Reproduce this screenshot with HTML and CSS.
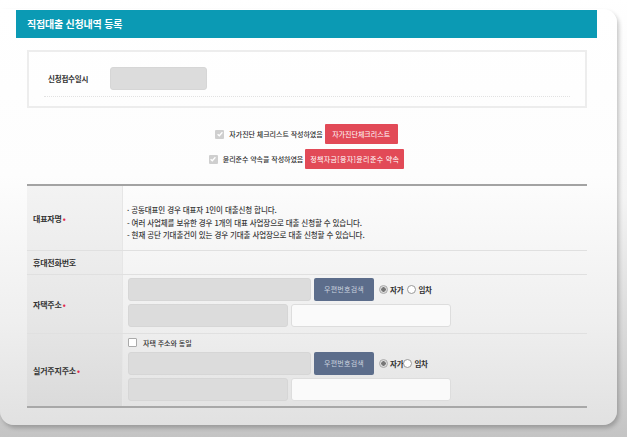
FILE: index.html
```html
<!DOCTYPE html>
<html lang="ko">
<head>
<meta charset="utf-8">
<title>직접대출 신청내역 등록</title>
<link rel="stylesheet" href="styles.css">
</head>
<body>
<div class="card">
  <div class="titlebar">직접대출 신청내역 등록</div>
  <div class="datebox">
    <div class="daterow">
      <span class="datelabel">신청접수일시</span>
      <span class="input gray w97"></span>
    </div>
  </div>
  <div class="checks">
    <div class="checkline">
      <span class="cb checked"><svg viewBox="0 0 8 8" width="8" height="8"><path d="M1.6 4.2 L3.3 5.8 L6.4 2.3" fill="none" stroke="#fff" stroke-width="1.3"/></svg></span>
      <span class="cbtext">자가진단 체크리스트 작성하였음</span>
      <span class="redbtn b1">자가진단체크리스트</span>
    </div>
    <div class="checkline">
      <span class="cb checked"><svg viewBox="0 0 8 8" width="8" height="8"><path d="M1.6 4.2 L3.3 5.8 L6.4 2.3" fill="none" stroke="#fff" stroke-width="1.3"/></svg></span>
      <span class="cbtext">윤리준수 약속을 작성하였음</span>
      <span class="redbtn b2">정책자금[융자]윤리준수 약속</span>
    </div>
  </div>
  <div class="table">
    <div class="row r1">
      <div class="th">대표자명 <span class="req">•</span></div>
      <div class="td notes">
        <div>· 공동대표인 경우 대표자 1인이 대출신청 합니다.</div>
        <div>- 여러 사업체를 보유한 경우 1개의 대표 사업장으로 대출 신청할 수 있습니다.</div>
        <div>- 현재 공단 기대출건이 있는 경우 기대출 사업장으로 대출 신청할 수 있습니다.</div>
      </div>
    </div>
    <div class="row r2">
      <div class="th">휴대전화번호</div>
      <div class="td"></div>
    </div>
    <div class="row r3">
      <div class="th">자택주소<span class="req">•</span></div>
      <div class="td addr">
        <div class="line">
          <span class="input gray w183"></span>
          <span class="postbtn">우편번호검색</span>
          <span class="radios">
            <span class="radio on"></span><span class="rtext">자가</span>
            <span class="radio sp"></span><span class="rtext">임차</span>
          </span>
        </div>
        <div class="line">
          <span class="input gray w160"></span>
          <span class="input white w160"></span>
        </div>
      </div>
    </div>
    <div class="row r4">
      <div class="th">실거주지주소<span class="req">•</span></div>
      <div class="td addr">
        <div class="sameline"><span class="cb empty"></span><span class="cbtext">자택 주소와 동일</span></div>
        <div class="line">
          <span class="input gray w183"></span>
          <span class="postbtn">우편번호검색</span>
          <span class="radios">
            <span class="radio on"></span><span class="rtext">자가</span><span class="radio"></span><span class="rtext">임차</span>
          </span>
        </div>
        <div class="line">
          <span class="input gray w160"></span>
          <span class="input white w160"></span>
        </div>
      </div>
    </div>
  </div>
</div>
</body>
</html>
```
FILE: styles.css
```css
* { box-sizing: border-box; }
html, body { height: 100%; }
body {
  margin: 0;
  font-family: "Noto Sans CJK KR", "Noto Sans", sans-serif;
  color: #333;
  background: linear-gradient(to bottom, #ffffff 0%, #f4f4f4 45%, #c4c4c4 100%);
  overflow: hidden;
}
.card {
  width: 617px;
  height: 416px;
  margin-top: 9px;
  padding: 1px 20px 0 16px;
  border-radius: 0 14px 14px 14px;
  background: linear-gradient(to bottom, #ffffff 0%, #fdfdfd 40%, #efefef 75%, #e1e1e1 100%);
  box-shadow: 2px 3px 4px rgba(0,0,0,0.22);
}
.titlebar {
  height: 28px;
  background: #0b9ab4;
  color: #fff;
  font-weight: 700;
  font-size: 10px;
  line-height: 28px;
  padding-left: 11px;
  letter-spacing: -0.2px;
}
.datebox {
  margin: 12px 10px 0 11px;
  height: 58px;
  border: 2px solid #ededed;
  padding: 14px 15px 0 15px;
}
.daterow {
  display: flex;
  align-items: center;
  border-bottom: 1px dotted #e2e2e2;
  padding-bottom: 5px;
  height: 31px;
}
.datelabel {
  font-size: 7.5px;
  font-weight: 700;
  width: 66px;
  padding-left: 4px;
  letter-spacing: -0.2px;
}
.input {
  display: inline-block;
  height: 23px;
  border-radius: 3px;
}
.gray { background: #dcdcdc; border: 1px solid #d6d6d6; }
.white { background: #fafafa; border: 1px solid #dddddd; }
.w97 { width: 97px; }
.w183 { width: 183px; }
.w160 { width: 160px; }

.checks {
  display: flex;
  flex-direction: column;
  align-items: center;
  gap: 5px;
  margin-top: 16px;
  margin-bottom: 15px;
}
.checkline {
  display: flex;
  align-items: center;
  height: 20px;
}
.cb {
  display: inline-flex;
  align-items: center;
  justify-content: center;
  width: 9px;
  height: 9px;
  border-radius: 1px;
  margin-right: 5px;
}
.cb.checked { background: #cfcfcf; }
.cb.empty { background: #fff; border: 1px solid #aaa; margin-right: 6px; }
.cbtext {
  font-size: 7px;
  letter-spacing: -0.05px;
  color: #2e2e2e;
  font-weight: 500;
}
.redbtn {
  margin-left: 2px;
  background: #e24a57;
  color: #fff;
  font-size: 7px;
  height: 20px;
  line-height: 20px;
  text-align: center;
  border-radius: 1px;
}
.b1 { width: 73px; }
.b2 { width: 99px; letter-spacing: 0.35px; }
.table {
  margin: 0 10px 0 11px;
  border-top: 2px solid #a3a3a3;
  border-bottom: 2px solid #a8a8a8;
}
.row {
  display: grid;
  grid-template-columns: 96px 1fr;
  border-bottom: 1px solid #e0e0e0;
}
.row:last-child { border-bottom: none; }
.r1 { height: 65px; }
.r2 { height: 24px; }
.r3 { height: 59px; }
.r4 { height: 72px; }
.th {
  background: rgba(0,0,0,0.035);
  border-right: 1px solid #e6e6e6;
  font-size: 8px;
  font-weight: 700;
  display: flex;
  align-items: center;
  padding-left: 6px;
  letter-spacing: -0.2px;
  color: #333;
}
.req { color: #e2284c; margin-left: 1px; font-size: 8px; }
.td { padding-left: 5px; }
.notes {
  font-size: 7.5px;
  line-height: 12.5px;
  letter-spacing: -0.1px;
  padding-left: 4px;
  padding-top: 18px;
  color: #3a3a3a;
  font-weight: 500;
}
.addr { display: flex; flex-direction: column; gap: 3px; padding-top: 3px; }
.r4 .addr { padding-top: 2px; }
.line { display: flex; align-items: center; gap: 3px; height: 23px; }
.postbtn {
  display: inline-block;
  width: 60px;
  height: 23px;
  line-height: 23px;
  background: #5c6d8b;
  color: #c9d1de;
  font-size: 7px;
  text-align: center;
  border-radius: 2px;
  letter-spacing: 0.2px;
}
.radios { display: flex; align-items: center; margin-left: 2px; }
.radio {
  display: inline-block;
  width: 9px;
  height: 9px;
  border-radius: 50%;
  border: 1px solid #999;
  background: #fff;
  margin-right: 2px;
}
.radio.on { background: radial-gradient(circle, #777 0 2px, #dcdcdc 2.5px); border-color: #aaa; }
.radio.sp { margin-left: 4px; }
.rtext { font-size: 7.5px; font-weight: 700; letter-spacing: -0.2px; color: #333; }
.sameline { display: flex; align-items: center; height: 13px; margin-bottom: 0; }
```
